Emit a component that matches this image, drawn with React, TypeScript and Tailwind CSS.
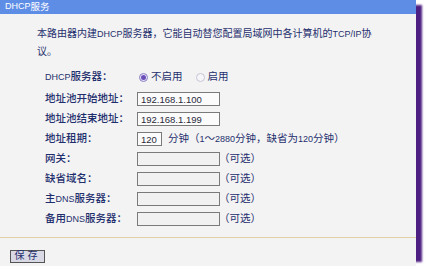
import React from 'react'

const font = { fontFamily: '"Liberation Sans", "Noto Sans CJK SC", sans-serif' }

// latin runs render narrower in the original bitmap font
function L({ children }: { children: React.ReactNode }) {
  return <span className="text-[9px]">{children}</span>
}

// ─── Small form pieces ───────────────────────────────────────────────────────
function Radio({ checked, label }: { checked?: boolean; label: string }) {
  return (
    <label className="flex items-center gap-[3px]">
      <span
        className={`w-[9px] h-[9px] rounded-full border flex items-center justify-center ${
          checked ? 'border-[#8a7fc8] bg-[#e8e4f6]' : 'border-[#c8c4d8] bg-[#f6f6f8]'
        }`}
      >
        {checked && <span className="w-[5px] h-[5px] rounded-full bg-[#6a4fb8]" />}
      </span>
      <span className="text-[10.5px] text-[#1f2f6e]">{label}</span>
    </label>
  )
}

function Field({ value, width = 'w-[83px]' }: { value?: string; width?: string }) {
  return (
    <div
      className={`${width} h-[14px] border border-[#7a7a7a] ${
        value ? 'bg-[#fbfbfb]' : 'bg-[#f1f1f1]'
      } flex items-center pl-[3px] text-[9.5px] text-[#2a2a3a] leading-none`}
    >
      {value}
    </div>
  )
}

function Row({ label, children }: { label: React.ReactNode; children: React.ReactNode }) {
  return (
    <div className="flex items-center h-[20px]">
      <span className="w-[92px] text-[10.5px] text-[#1f2f6e] font-medium">{label}</span>
      {children}
    </div>
  )
}

const optional = <span className="-ml-[1px] text-[10.5px] text-[#1f2f6e]">（可选）</span>

export default function App() {
  return (
    <div className="w-[430px] h-[270px] bg-white" style={font}>
      <div className="w-[416px] h-[257px] flex flex-col shadow-[6px_5px_2px_#4e1f82]">
        {/* Title bar */}
        <div className="h-[20px] bg-[#5e8de6] flex items-center px-[5px] text-white text-[9.5px]">
          <L>DHCP</L>服务
        </div>

        {/* Body */}
        <div className="flex-1 bg-[#f3f3f3] flex flex-col pt-[11px]">
          <p className="pl-[37px] text-[10px] leading-[18px] text-[#1f2f6e] whitespace-nowrap">
            本路由器内建<L>DHCP</L>服务器，它能自动替您配置局域网中各计算机的<L>TCP/IP</L>协<br />议。
          </p>

          <div className="pl-[45px] mt-[6px] flex flex-col">
            <Row label={<><L>DHCP</L>服务器：</>}>
              <div className="flex items-center gap-[13px] pl-[2px]">
                <Radio checked label="不启用" />
                <Radio label="启用" />
              </div>
            </Row>
            <div className="mt-[2px]" />
            <Row label="地址池开始地址：">
              <Field value="192.168.1.100" />
            </Row>
            <Row label="地址池结束地址：">
              <Field value="192.168.1.199" />
            </Row>
            <Row label="地址租期：">
              <Field value="120" width="w-[25px]" />
              <span className="ml-[6px] text-[10.5px] text-[#1f2f6e]">
                分钟（<L>1</L>～<L>2880</L>分钟，缺省为<L>120</L>分钟）
              </span>
            </Row>
            <Row label="网关：">
              <Field />
              {optional}
            </Row>
            <Row label="缺省域名：">
              <Field />
              {optional}
            </Row>
            <Row label={<>主<L>DNS</L>服务器：</>}>
              <Field />
              {optional}
            </Row>
            <Row label={<>备用<L>DNS</L>服务器：</>}>
              <Field />
              {optional}
            </Row>
          </div>

          <div className="mt-[8px] border-t border-[#e2cfa6]" />

          <div className="pl-[10px] mt-[4px]">
            <button className="h-[13px] w-[35px] border border-[#555] bg-[#d9d9e6] text-[10px] leading-none text-[#1f2f6e] tracking-[3px]">
              保存
            </button>
          </div>
        </div>
      </div>
    </div>
  )
}
